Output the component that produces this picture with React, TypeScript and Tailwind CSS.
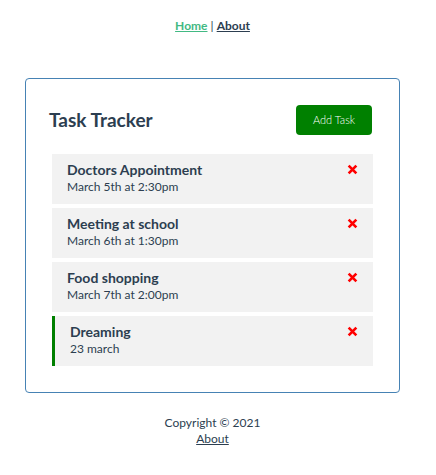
import React from "react";

const tasks = [
  { id: 1, text: "Doctors Appointment", day: "March 5th at 2:30pm", reminder: false },
  { id: 2, text: "Meeting at school", day: "March 6th at 1:30pm", reminder: false },
  { id: 3, text: "Food shopping", day: "March 7th at 2:00pm", reminder: false },
  { id: 4, text: "Dreaming", day: "23 march", reminder: true },
];

function X() {
  return (
    <svg width="11" height="11" viewBox="0 0 10 10" className="block">
      <path d="M1.5 1.5 L8.5 8.5 M8.5 1.5 L1.5 8.5" stroke="#ff0000" strokeWidth="2.4" strokeLinecap="butt" />
    </svg>
  );
}

export default function App() {
  return (
    <div
      className="w-[425px] flex flex-col items-center text-[#2c3e50] antialiased"
      style={{ fontFamily: "Lato, 'Noto Sans', sans-serif" }}
    >
      <nav className="pt-[19px] text-[12px] leading-[14px] font-bold">
        <a className="text-[#42b983] underline">Home</a>
        <span className="font-normal"> | </span>
        <a className="text-[#2c3e50] underline">About</a>
      </nav>
      <div className="mt-[45px] w-[375px] h-[315px] border border-[#4682b4] rounded-[4px] px-[22px] pt-[23px]">
        <header className="flex items-center justify-between mb-[16px] pl-[1px]">
          <h2 className="text-[19px] font-bold leading-[24px] -mt-[1px]">Task Tracker</h2>
          <button className="m-[3px] mr-[5px] w-[76px] h-[30px] bg-[#008000] text-white rounded-[4px] text-[11px] font-light">
            Add Task
          </button>
        </header>
        <div className="flex flex-col gap-[4px] px-[4px]">
          {tasks.map((t) => (
            <div
              key={t.id}
              className={
                "bg-[#f2f2f2] h-[50px] pt-[7px] pr-[15px] " +
                (t.reminder ? "border-l-[3px] border-[#008000] pl-[15px]" : "pl-[15px]")
              }
            >
              <h3 className="flex items-center justify-between text-[14px] font-bold leading-[17px]">
                <span>{t.text}</span>
                <X />
              </h3>
              <p className="text-[12px] leading-[16px] mt-[1px]">{t.day}</p>
            </div>
          ))}
        </div>
      </div>
      <footer className="mt-[22px] text-[12px] leading-[16px] text-center text-[#2c3e50]">
        <p>Copyright &copy; 2021</p>
        <a className="underline">About</a>
      </footer>
    </div>
  );
}
